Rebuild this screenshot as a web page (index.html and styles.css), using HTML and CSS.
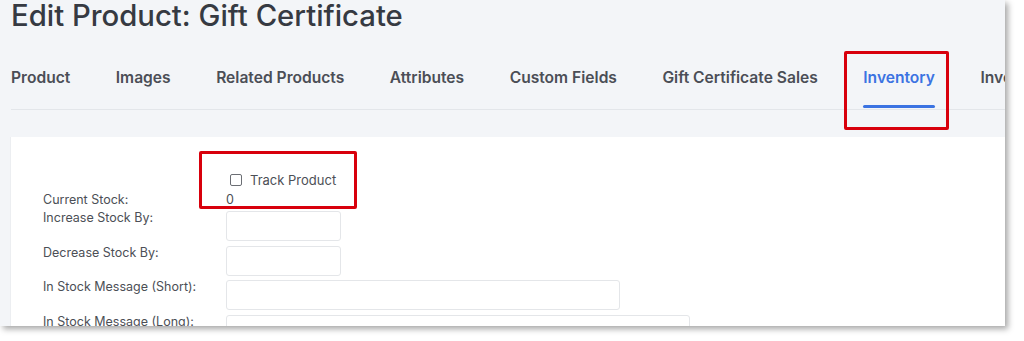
FILE: index.html
```html
<!DOCTYPE html>
<html>
<head>
<meta charset="utf-8">
<link rel="stylesheet" href="styles.css">
</head>
<body>
<div class="window">
  <h1 class="title">Edit Product: Gift Certificate</h1>
  <nav class="tabs">
    <span class="tab">Product</span>
    <span class="tab">Images</span>
    <span class="tab">Related Products</span>
    <span class="tab">Attributes</span>
    <span class="tab">Custom Fields</span>
    <span class="tab">Gift Certificate Sales</span>
    <span class="tab active">Inventory<span class="mark mark-tab"></span></span>
    <span class="tab">Inventory Settings</span>
  </nav>
  <section class="card">
    <div class="form">
      <div class="label"></div>
      <div class="value track">
        <label class="check"><span class="box"></span>Track Product</label>
        <span class="mark mark-track"></span>
      </div>
      <div class="label stock">Current Stock:</div>
      <div class="value stock">0</div>
      <div class="label">Increase Stock By:</div>
      <div class="value"><input class="field short" type="text"></div>
      <div class="label">Decrease Stock By:</div>
      <div class="value"><input class="field short" type="text"></div>
      <div class="label">In Stock Message (Short):</div>
      <div class="value"><input class="field mid" type="text"></div>
      <div class="label">In Stock Message (Long):</div>
      <div class="value"><input class="field long" type="text"></div>
    </div>
  </section>
</div>
</body>
</html>
```

FILE: styles.css
```css
html, body {
  margin: 0;
  padding: 0;
  background: #ffffff;
}
body {
  font-family: Inter, "Noto Sans", sans-serif;
  width: 1024px;
  height: 341px;
  overflow: hidden;
}
.window {
  width: 1005px;
  height: 326px;
  background: #f3f5f8;
  box-shadow: 3px 3px 6px rgba(0, 0, 0, 0.35);
  overflow: hidden;
  display: flex;
  flex-direction: column;
}
.title {
  margin: 0;
  padding: 0 0 0 11px;
  font-size: 29.3px;
  font-weight: 500;
  line-height: 32px;
  color: #363a42;
  height: 32px;
  flex: none;
}
.tabs {
  display: flex;
  gap: 45.5px;
  margin: 29px 0 0 11px;
  border-bottom: 1px solid #e3e6ea;
  white-space: nowrap;
  height: 48px;
  flex: none;
}
.tab {
  position: relative;
  font-size: 15.6px;
  font-weight: 600;
  color: #4b4e56;
  line-height: 18px;
  padding-top: 8px;
  height: 40px;
}
.tab.active {
  color: #3b73e2;
}
.tab.active::after {
  content: "";
  position: absolute;
  left: 0;
  right: 0;
  bottom: 1px;
  height: 3px;
  border-radius: 2px;
  background: #3b73e2;
}
.mark {
  position: absolute;
  border: 3px solid #d8000c;
  border-radius: 2px;
  box-sizing: border-box;
}
.mark-tab {
  left: -19px;
  right: -14px;
  top: -10px;
  bottom: -21px;
}
.card {
  margin: 27px 0 0 10px;
  background: #ffffff;
  flex: 1;
  border-left: 1px solid #eceef1;
}
.form {
  display: grid;
  grid-template-columns: 183px 1fr;
  padding: 35px 0 0 32px;
  row-gap: 4.5px;
  font-size: 12.5px;
  color: #4c4f56;
}
.label {
  line-height: 14px;
}
.value {
  position: relative;
  line-height: 16px;
}
.stock {
  line-height: 14px;
}
.track {
  padding-left: 4px;
}
.check {
  display: flex;
  align-items: center;
  gap: 8px;
  font-size: 13px;
}
.box {
  width: 10px;
  height: 10px;
  border: 1px solid #6b6e74;
  border-radius: 2px;
}
.mark-track {
  left: -27px;
  top: -21px;
  width: 158px;
  height: 58px;
}
.field {
  display: block;
  box-sizing: border-box;
  height: 30px;
  border: 1px solid #e4e6e9;
  border-radius: 3px;
  background: #fff;
  margin: 0;
  padding: 0;
}
.short { width: 115px; }
.mid { width: 394px; }
.long { width: 464px; }
```
